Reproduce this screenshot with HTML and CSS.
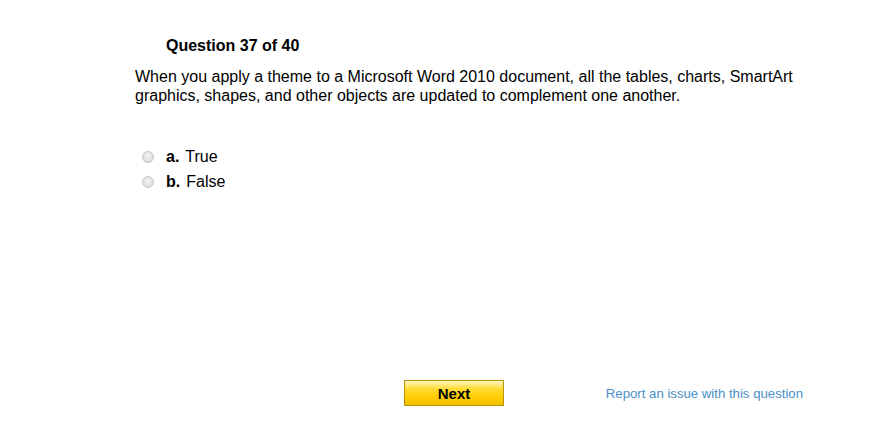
FILE: index.html
```html
<!DOCTYPE html>
<html lang="en">
<head>
  <meta charset="UTF-8">
  <title>Question 37 of 40</title>
  <link rel="stylesheet" href="styles.css">
</head>
<body>

<!-- Question -->
<div class="quiz">
  <div class="question-title">Question 37 of 40</div>
  <p class="question-text">When you apply a theme to a Microsoft Word 2010 document, all the tables, charts, SmartArt graphics, shapes, and other objects are updated to complement one another.</p>

  <ul class="answers">
    <li><label><input type="radio" name="answer"><b>a.</b> True</label></li>
    <li><label><input type="radio" name="answer"><b>b.</b> False</label></li>
  </ul>

  <!-- Footer -->
  <div class="quiz-footer">
    <button class="next-button">Next</button>
    <a class="report-link" href="#">Report an issue with this question</a>
  </div>
</div>

</body>
</html>
```

FILE: styles.css
```css
body {
  margin: 0;
  font-family: "Liberation Sans", Arial, sans-serif;
  color: #000;
  background: #fff;
}

.quiz {
  width: 668px;
  padding: 36px 0 0 135px;
}

.question-title {
  font-size: 16px;
  font-weight: bold;
  line-height: 19px;
  padding-left: 31px;
}

.question-text {
  margin: 12px 0 0;
  font-size: 16px;
  line-height: 19px;
}

/* Answers */
.answers {
  list-style-type: none;
  margin: 39px 0 0;
  padding: 0 0 0 7px;
}

.answers li {
  font-size: 16px;
  line-height: 25px;
}

.answers label {
  display: flex;
  align-items: center;
}

.answers input {
  appearance: none;
  -webkit-appearance: none;
  width: 12px;
  height: 12px;
  margin: 0 12px 0 0;
  border: 1px solid #c4c4c4;
  border-radius: 50%;
  background: radial-gradient(circle at 50% 40%, #f4f4f4 0%, #e2e2e2 60%, #d4d4d4 100%);
}

.answers b {
  margin-right: 6px;
}

/* Footer */
.quiz-footer {
  display: flex;
  align-items: center;
  margin-top: 186px;
  padding-left: 269px;
}

.next-button {
  width: 100px;
  height: 26px;
  background: linear-gradient(#fff7c0 0%, #ffd92e 35%, #ffcc00 70%, #f2c100 100%);
  border: 1px solid #b8950c;
  font-family: "Liberation Sans", Arial, sans-serif;
  font-size: 15px;
  font-weight: bold;
  color: #000;
  padding: 0;
  cursor: pointer;
}

.report-link {
  margin-left: auto;
  font-size: 13.2px;
  color: #4a8fc7;
  text-decoration: none;
}
```
